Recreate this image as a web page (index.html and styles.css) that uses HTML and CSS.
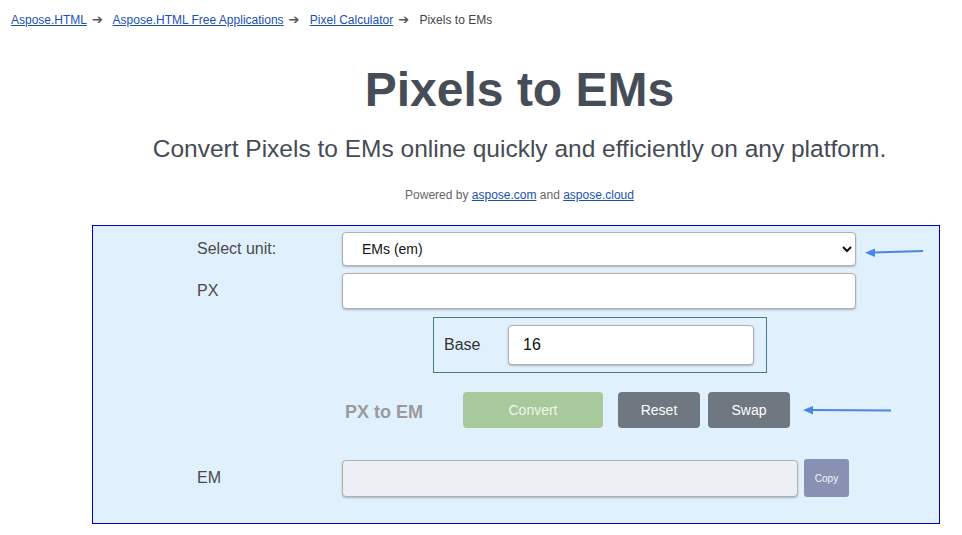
FILE: index.html
```html
<!DOCTYPE html>
<html lang="en">
<head>
  <meta charset="UTF-8">
  <title>Pixels to EMs</title>
  <link rel="stylesheet" href="styles.css">
</head>
<body>
  <div class="breadcrumbs">
    <a href="#">Aspose.HTML</a><span class="sep">➔</span>
    <a href="#">Aspose.HTML Free Applications</a><span class="sep">➔</span>
    <a href="#">Pixel Calculator</a><span class="sep">➔</span>
    <span class="current">Pixels to EMs</span>
  </div>

  <div class="header">
    <h1>Pixels to EMs</h1>
    <p class="subtitle">Convert Pixels to EMs online quickly and efficiently on any platform.</p>
    <p class="powered">Powered by <a href="#">aspose.com</a> and <a href="#">aspose.cloud</a></p>
  </div>

  <div class="calc">
    <div class="row first">
      <label class="lbl" for="unit">Select unit:</label>
      <select id="unit" class="field select">
        <option>EMs (em)</option>
        <option>Points (pt)</option>
        <option>Percent (%)</option>
      </select>
    </div>

    <div class="row">
      <label class="lbl" for="px">PX</label>
      <input type="text" id="px" class="field input">
    </div>

    <div class="row">
      <span class="lbl"></span>
      <div class="base-box">
        <label class="base-lbl" for="base">Base</label>
        <input type="text" id="base" class="field base-input" value="16">
      </div>
    </div>

    <div class="row actions">
      <span class="lbl"></span>
      <span class="mode">PX to EM</span>
      <button class="btn convert">Convert</button>
      <button class="btn grey reset">Reset</button>
      <button class="btn grey">Swap</button>
    </div>

    <div class="row result">
      <label class="lbl" for="em">EM</label>
      <input type="text" id="em" class="field output" readonly>
      <button class="copy">Copy</button>
    </div>

    <!-- note arrows -->
    <svg class="arrow arrow-select" width="60" height="12" viewBox="0 0 60 12">
      <line x1="58" y1="5" x2="8" y2="6.5" stroke="#4a86e8" stroke-width="2"/>
      <polygon points="0,6.8 10,2.5 10,11" fill="#4a86e8"/>
    </svg>
    <svg class="arrow arrow-swap" width="90" height="12" viewBox="0 0 90 12">
      <line x1="88" y1="6.5" x2="8" y2="6" stroke="#4a86e8" stroke-width="2"/>
      <polygon points="0,6 10,2 10,10.5" fill="#4a86e8"/>
    </svg>
  </div>
</body>
</html>
```

FILE: styles.css
```css
body {
  margin: 0;
  font-family: "Liberation Sans", Arial, sans-serif;
  background-color: #fff;
  color: #444;
}

a {
  color: #1a50b5;
}

.breadcrumbs {
  padding: 13px 0 0 11px;
  font-size: 12px;
  line-height: 14px;
  color: #444;
}

.breadcrumbs .sep {
  font-family: "DejaVu Sans", sans-serif;
  font-size: 13px;
  margin: 0 7px 0 5px;
  color: #555;
}

.header {
  margin-left: 77px;
  text-align: center;
}

h1 {
  margin: 35px 0 0;
  font-size: 48px;
  line-height: 56px;
  color: #474d57;
}

.subtitle {
  margin: 16px 0 0;
  font-size: 24.5px;
  line-height: 30px;
  color: #454b55;
}

.powered {
  margin: 23px 0 0;
  font-size: 12px;
  line-height: 16px;
  color: #666;
}

.calc {
  position: relative;
  margin: 22px 0 0 92px;
  width: 742px;
  padding: 6px 0 26px 104px;
  background-color: #e1f0fd;
  border: 1px solid #0000cc;
}

.row {
  display: flex;
  align-items: center;
  margin-top: 7px;
}

.row.first {
  margin-top: 0;
}

.lbl {
  width: 145px;
  flex-shrink: 0;
  font-size: 16px;
  color: #4a4a4a;
}

.field {
  box-sizing: border-box;
  font-family: "Liberation Sans", Arial, sans-serif;
  border: 1px solid #b0b0b0;
  border-radius: 4px;
  background-color: #fff;
  box-shadow: 0 1px 2px rgba(0, 0, 0, 0.25);
}

.select {
  width: 514px;
  height: 34px;
  padding: 0 10px 0 15px;
  font-size: 14px;
  color: #111;
}

.input {
  width: 514px;
  height: 36px;
}

.base-box {
  display: flex;
  align-items: center;
  margin: 1px 0 0 91px;
  width: 311px;
  height: 40px;
  padding: 7px 11px 7px 10px;
  border: 1px solid #4a7a8c;
}

.base-lbl {
  width: 64px;
  font-size: 16px;
  color: #333;
}

.base-input {
  width: 246px;
  height: 40px;
  padding: 0 14px;
  font-size: 16px;
  color: #111;
}

.actions {
  margin-top: 19px;
}

.mode {
  margin-left: 3px;
  padding-top: 4px;
  width: 118px;
  font-size: 18px;
  font-weight: bold;
  color: #9a9a9a;
}

.btn {
  height: 36px;
  border: none;
  border-radius: 4px;
  font-family: "Liberation Sans", Arial, sans-serif;
  font-size: 14px;
  color: #fff;
  cursor: pointer;
}

.convert {
  width: 140px;
  background-color: #a7c99b;
  color: #f1f6ee;
}

.grey {
  width: 82px;
  background-color: #6f7881;
}

.reset {
  margin: 0 8px 0 15px;
}

.result {
  margin-top: 31px;
}

.output {
  width: 456px;
  height: 37px;
  background-color: #eceff3;
}

.copy {
  margin-left: 6px;
  width: 45px;
  height: 38px;
  border: none;
  border-radius: 3px;
  background-color: #8891b4;
  color: #f4f5fa;
  font-family: "Liberation Sans Narrow", "Liberation Sans", Arial, sans-serif;
  font-size: 10px;
}

.arrow {
  position: absolute;
}

.arrow-select {
  left: 772px;
  top: 20px;
}

.arrow-swap {
  left: 710px;
  top: 178px;
}
```
